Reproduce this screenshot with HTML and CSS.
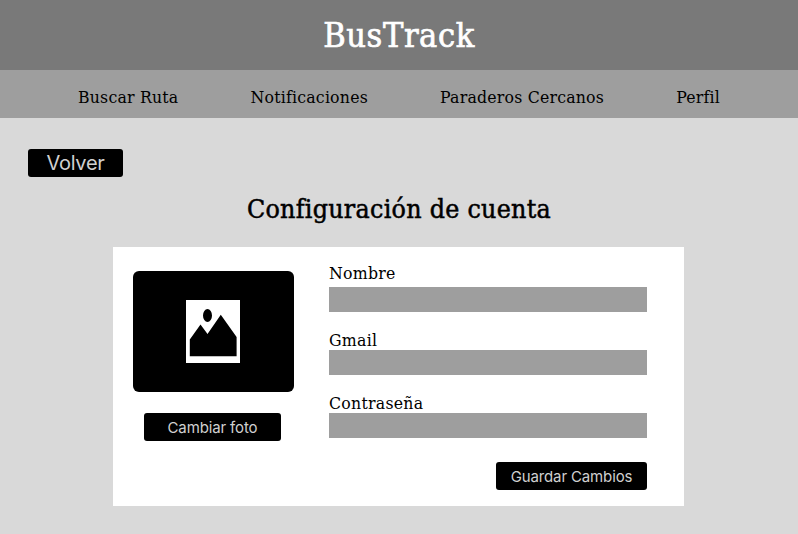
FILE: index.html
```html
<!DOCTYPE html>
<html lang="es">
<head>
<meta charset="utf-8">
<title>BusTrack</title>
<link rel="stylesheet" href="styles.css">
</head>
<body>
<header class="top"><h1 class="brand">BusTrack</h1></header>
<nav class="nav">
  <a class="link">Buscar Ruta</a>
  <a class="link">Notificaciones</a>
  <a class="link">Paraderos Cercanos</a>
  <a class="link">Perfil</a>
</nav>
<main class="page">
  <button class="btn btn-back">Volver</button>
  <h2 class="title">Configuración de cuenta</h2>
  <section class="card">
    <div class="photo-col">
      <div class="photo">
        <svg class="picture" viewBox="0 0 54 63" aria-hidden="true">
          <path fill="#fff" d="M0 0h54v63H0z"/>
          <ellipse cx="21.5" cy="15.5" rx="4.5" ry="6.4"/>
          <path d="M3.8 39.5 14.5 24.5 21.5 34 34.8 14.7 50.6 37V56.3H3.8z"/>
        </svg>
      </div>
      <button class="btn btn-photo">Cambiar foto</button>
    </div>
    <form class="form">
      <label class="label label-first" for="nombre">Nombre</label>
      <input class="field" id="nombre">
      <label class="label" for="gmail">Gmail</label>
      <input class="field" id="gmail">
      <label class="label" for="clave">Contraseña</label>
      <input class="field" id="clave" type="password">
      <button class="btn btn-save" type="button">Guardar Cambios</button>
    </form>
  </section>
</main>
</body>
</html>
```

FILE: styles.css
```css
* { box-sizing: border-box; }
body {
  margin: 0;
  background: #d9d9d9;
  color: #000;
  font-family: "DejaVu Serif Condensed", "DejaVu Serif", serif;
  font-stretch: condensed;
  font-feature-settings: "liga" 1;
}
.top {
  height: 70px;
  background: #797979;
  display: flex;
  justify-content: center;
}
.brand {
  margin: 0;
  padding-top: 15px;
  color: #fff;
  font-size: 34px;
  line-height: 41px;
  font-weight: 400;
  letter-spacing: 0.6px;
  -webkit-text-stroke: 0.7px #fff;
}
.nav {
  height: 48px;
  padding: 5px 78px 0;
  background: #9e9e9e;
  display: flex;
  justify-content: space-between;
  align-items: center;
}
.link {
  font-size: 17.5px;
  line-height: 24px;
  letter-spacing: 0.2px;
  white-space: nowrap;
}
.page {
  display: flex;
  flex-direction: column;
  padding-top: 31px;
}
.btn {
  display: block;
  height: 28px;
  padding: 0;
  border: 0;
  border-radius: 3px;
  background: #000;
  color: #d0d0d0;
  font: 400 15px/28px Inter, sans-serif;
  letter-spacing: -0.13px;
  white-space: nowrap;
}
.btn-back {
  width: 95px;
  margin-left: 28px;
  font-size: 20px;
  letter-spacing: -0.3px;
}
.title {
  margin: 14px 0 0;
  text-align: center;
  font-size: 26.5px;
  line-height: 36px;
  font-weight: 400;
  letter-spacing: 0.28px;
  -webkit-text-stroke: 0.5px #000;
}
.card {
  width: 571px;
  height: 259px;
  margin: 20px 0 0 113px;
  padding: 0 37px 0 20px;
  background: #fff;
  display: flex;
  justify-content: space-between;
}
.photo-col {
  width: 160.5px;
  padding-top: 24px;
}
.photo {
  height: 120.5px;
  border-radius: 6px;
  background: #000;
  display: flex;
  align-items: center;
  justify-content: center;
}
.picture {
  width: 54px;
  height: 63px;
}
.btn-photo {
  width: 137px;
  margin: 21.5px 0 0 11px;
  padding-top: 1px;
}
.form {
  width: 318px;
  display: flex;
  flex-direction: column;
  padding-top: 14px;
}
.label {
  height: 22px;
  margin-top: 16px;
  font-size: 17.5px;
  line-height: 24px;
  letter-spacing: 0.25px;
}
.label-first {
  height: 26px;
  margin-top: 0;
}
.field {
  width: 100%;
  height: 25px;
  padding: 0 8px;
  border: 0;
  border-radius: 0;
  background: #9e9e9e;
  font: inherit;
}
.btn-save {
  width: 151px;
  margin: 24px 0 0 auto;
  padding-top: 1px;
}
```
